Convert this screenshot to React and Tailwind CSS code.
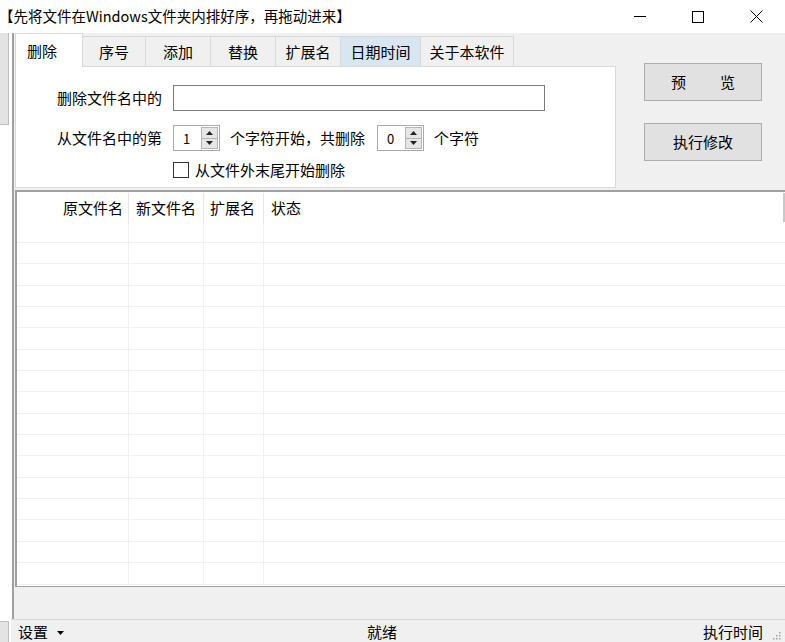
import React from 'react';

const font = { fontFamily: '"Noto Sans CJK SC", "Microsoft YaHei", sans-serif' };

const tabs = [
    { name: '删除', w: 'w-[68px]', active: true },
    { name: '序号', w: 'w-[63px]' },
    { name: '添加', w: 'w-[65px]' },
    { name: '替换', w: 'w-[65px]' },
    { name: '扩展名', w: 'w-[65px]' },
    { name: '日期时间', w: 'w-[80px]', hover: true },
    { name: '关于本软件', w: 'w-[93px]' },
];

function Spinner({ value }) {
    return (
        <div className="w-[47px] h-[26px] bg-white border border-[#a9a9a9] flex items-center justify-between pl-[9px] pr-[1px]">
            <span className="text-[13px] leading-none">{value}</span>
            <div className="w-[17px] h-[22px] flex flex-col bg-[#e6e6e6] border border-[#b5b5b5]">
                <div className="flex-1 flex items-center justify-center border-b border-[#b5b5b5]">
                    <svg width="7" height="4" viewBox="0 0 7 4"><path d="M0 4 L3.5 0 L7 4 Z" fill="#222" /></svg>
                </div>
                <div className="flex-1 flex items-center justify-center">
                    <svg width="7" height="4" viewBox="0 0 7 4"><path d="M0 0 L3.5 4 L7 0 Z" fill="#222" /></svg>
                </div>
            </div>
        </div>
    );
}

export default function App() {
    const rows = Array.from({ length: 17 });

    return (
        <div style={font} className="w-[785px] h-[642px] flex flex-col bg-white text-black overflow-hidden">
            {/* title bar */}
            <div className="h-[33px] flex items-center justify-between bg-white shrink-0">
                <span className="text-[14.5px] -ml-[1px] pb-[2px]">【先将文件在Windows文件夹内排好序，再拖动进来】</span>
                <div className="flex items-center h-full">
                    <div className="w-[58px] h-full flex items-center justify-center">
                        <div className="w-[12px] h-px bg-black" />
                    </div>
                    <div className="w-[58px] h-full flex items-center justify-center">
                        <div className="w-[12px] h-[12px] border border-black" />
                    </div>
                    <div className="w-[58px] h-full flex items-center justify-center">
                        <svg width="13" height="13" viewBox="0 0 13 13"><path d="M0.5 0.5 L12.5 12.5 M12.5 0.5 L0.5 12.5" stroke="#000" strokeWidth="1" /></svg>
                    </div>
                </div>
            </div>

            <div className="flex-1 flex min-h-0">
                {/* left strip (neighbour window edge) */}
                <div className="w-[15px] flex shrink-0 bg-white">
                    <div className="w-[9px] flex flex-col">
                        <div className="h-[92px] bg-[#e3e3e3] border-r border-b border-[#bdbdbd]" />
                        <div className="flex-1" />
                        <div className="h-[21px] bg-[#e3e3e3] border-r border-t border-[#bdbdbd]" />
                    </div>
                    <div className="w-[3px]" />
                    <div className="w-[2px] bg-[#a0a0a0]" />
                    <div className="w-px bg-[#f0f0f0]" />
                </div>

                {/* main window body */}
                <div className="flex-1 flex flex-col bg-[#f0f0f0] min-w-0">
                    <div className="h-[155px] flex shrink-0">
                        {/* tab control */}
                        <div className="w-[601px] flex flex-col">
                            <div className="h-[33px] flex items-end">
                                {tabs.map((t) =>
                                    t.active ? (
                                        <div key={t.name} className={`${t.w} h-[34px] bg-white border border-b-0 border-[#d9d9d9] pl-[11px] pt-[6px] text-[15px] relative z-10 -mb-px`}>
                                            {t.name}
                                        </div>
                                    ) : (
                                        <div key={t.name} className={`${t.w} h-[30px] border border-l-0 border-b-0 border-[#d9d9d9] flex items-center justify-center pt-[2px] text-[15px] ${t.hover ? 'bg-[#d8e6f2]' : 'bg-[#f0f0f0]'}`}>
                                            {t.name}
                                        </div>
                                    )
                                )}
                            </div>
                            <div className="flex-1 bg-white border border-[#d9d9d9] pl-[41px] pt-[18px] text-[15px]">
                                <div className="flex items-center h-[26px]">
                                    <span className="w-[116px]">删除文件名中的</span>
                                    <div className="w-[372px] h-[26px] border border-[#7a7a7a] bg-white" />
                                </div>
                                <div className="flex items-center h-[26px] mt-[14px]">
                                    <span className="w-[116px]">从文件名中的第</span>
                                    <Spinner value="1" />
                                    <span className="ml-[10px] w-[147px]">个字符开始，共删除</span>
                                    <Spinner value="0" />
                                    <span className="ml-[10px]">个字符</span>
                                </div>
                                <div className="flex items-center h-[20px] mt-[9px] pl-[116px]">
                                    <div className="w-[16px] h-[16px] border border-[#333] bg-white" />
                                    <span className="ml-[6px]">从文件外末尾开始删除</span>
                                </div>
                            </div>
                        </div>

                        {/* buttons */}
                        <div className="flex flex-col pl-[28px] pt-[30px] gap-[22px]">
                            <button className="w-[118px] h-[38px] bg-[#e1e1e1] border border-[#adadad] text-[15px] flex items-center justify-center gap-[34px]">
                                <span>预</span><span>览</span>
                            </button>
                            <button className="w-[118px] h-[38px] bg-[#e1e1e1] border border-[#adadad] text-[15px] flex items-center justify-center">
                                执行修改
                            </button>
                        </div>
                    </div>

                    {/* list view */}
                    <div className="h-[397px] mt-[2px] shrink-0 bg-white border-t-2 border-l-2 border-b border-t-[#a0a0a0] border-l-[#a0a0a0] border-b-[#a0a0a0] flex flex-col relative text-[15px]">
                        <div className="absolute right-0 top-[1px] w-[2px] h-[29px] bg-[#c8c8c8]" />
                        <div className="h-[30px] mt-px flex shrink-0">
                            <div className="w-[112px] border-r border-[#e5e5e5] flex items-center justify-end pr-[5px]">原文件名</div>
                            <div className="w-[75px] border-r border-[#e5e5e5] flex items-center pl-[7px]">新文件名</div>
                            <div className="w-[60px] border-r border-[#e5e5e5] flex items-center pl-[6px]">扩展名</div>
                            <div className="flex-1 flex items-center pl-[7px]">状态</div>
                        </div>
                        <div className="flex-1 overflow-hidden">
                            {rows.map((_, i) => (
                                <div key={i} className={`flex border-b border-[#f0f0f0] ${i === 0 ? 'h-[20px]' : 'h-[21.35px]'}`}>
                                    <div className="w-[112px] border-r border-[#f0f0f0]" />
                                    <div className="w-[75px] border-r border-[#f0f0f0]" />
                                    <div className="w-[60px] border-r border-[#f0f0f0]" />
                                    <div className="flex-1" />
                                </div>
                            ))}
                        </div>
                    </div>

                    <div className="flex-1" />

                    {/* status bar */}
                    <div className="h-[23px] shrink-0 border-t border-[#d7d7d7] flex items-center pt-[3px] text-[15px] -ml-[4px] pl-[7px] bg-[#f0f0f0] whitespace-nowrap">
                        <span className="shrink-0">设置</span>
                        <svg className="ml-[9px] shrink-0" width="7" height="4" viewBox="0 0 7 4"><path d="M0 0 L3.5 4 L7 0 Z" fill="#000" /></svg>
                        <span className="ml-[303px] shrink-0">就绪</span>
                        <span className="ml-[306px] shrink-0">执行时间</span>
                        <svg className="ml-[10px] mt-[6px] shrink-0" width="8" height="8" viewBox="0 0 8 8">
                            <rect x="6" y="0" width="1.5" height="1.5" fill="#a0a0a0" />
                            <rect x="3" y="3" width="1.5" height="1.5" fill="#a0a0a0" />
                            <rect x="6" y="3" width="1.5" height="1.5" fill="#a0a0a0" />
                            <rect x="0" y="6" width="1.5" height="1.5" fill="#a0a0a0" />
                            <rect x="3" y="6" width="1.5" height="1.5" fill="#a0a0a0" />
                            <rect x="6" y="6" width="1.5" height="1.5" fill="#a0a0a0" />
                        </svg>
                    </div>
                </div>
            </div>
        </div>
    );
}
